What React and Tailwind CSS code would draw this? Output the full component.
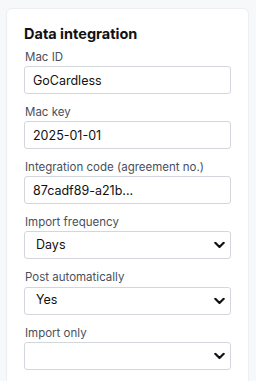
import React from 'react';

const Chevron = () => (
  <svg className="pointer-events-none absolute right-[6px] top-1/2 -translate-y-1/2" width="11" height="7" viewBox="0 0 11 7" fill="none">
    <path d="M1.3 1.3L5.5 5.5l4.2-4.2" stroke="#111" strokeWidth="2.2" strokeLinecap="round" strokeLinejoin="round" />
  </svg>
);

const TextField = ({ label, value }) => (
  <div className="flex flex-col">
    <label className="text-[11.5px] leading-4 text-[#4a4f5c] pl-px">{label}</label>
    <input
      readOnly
      value={value}
      className="mt-px h-7 w-full rounded-[3px] border border-[#d4d6dd] bg-white px-2 text-[12.5px] text-[#111] outline-none"
    />
  </div>
);

const SelectField = ({ label, value }) => (
  <div className="flex flex-col">
    <label className="text-[11.5px] leading-4 text-[#4a4f5c] pl-px">{label}</label>
    <div className="relative mt-px">
      <select
        defaultValue={value}
        className="h-7 w-full appearance-none rounded-[3px] border border-[#d4d6dd] bg-white pl-[11px] pr-8 text-[12.5px] text-[#111] outline-none"
      >
        <option value={value}>{value}</option>
      </select>
      <Chevron />
    </div>
  </div>
);

export default function App() {
  return (
    <div className="min-h-[381px] bg-[#f7f8fa] pl-[6px] pr-[7px] pt-2 font-['Inter',sans-serif]">
      <div className="min-h-[400px] rounded-t-md border border-[#eceef3] bg-white pl-[17px] pr-[17px] pt-[15px]">
        <h2 className="text-[14.5px] font-bold leading-5 text-[#111]">Data integration</h2>
        <div className="mt-[5px] flex flex-col gap-[10px]">
          <TextField label="Mac ID" value="GoCardless" />
          <TextField label="Mac key" value="2025-01-01" />
          <TextField label="Integration code (agreement no.)" value="87cadf89-a21b..." />
          <SelectField label="Import frequency" value="Days" />
          <SelectField label="Post automatically" value="Yes" />
          <SelectField label="Import only" value="" />
        </div>
      </div>
    </div>
  );
}
